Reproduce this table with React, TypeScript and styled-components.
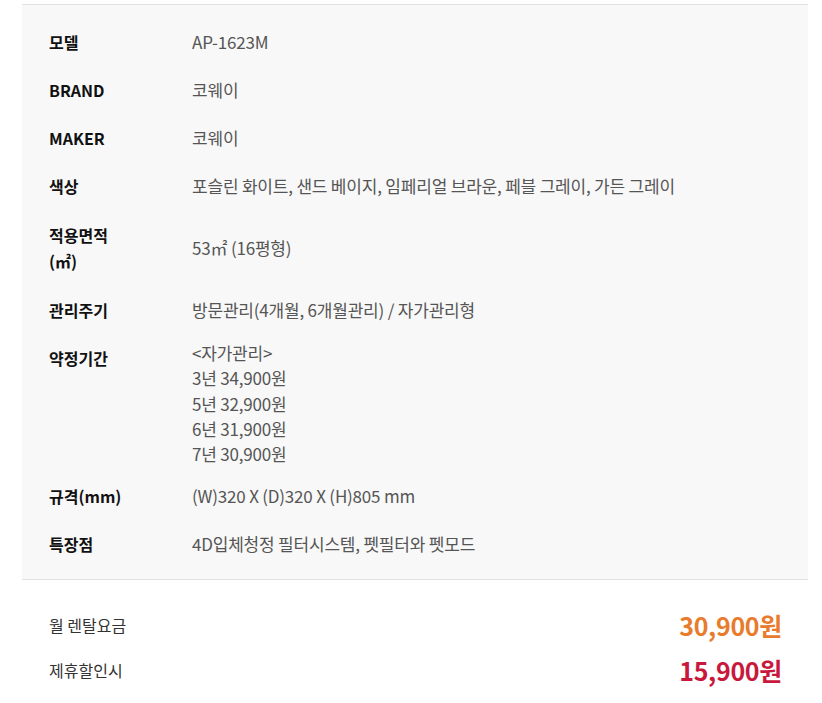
import React from 'react';
import styled, { createGlobalStyle } from 'styled-components';

const GlobalStyle = createGlobalStyle`
  body {
    margin: 0;
    background: #ffffff;
    font-family: 'Noto Sans CJK KR', 'Noto Sans', sans-serif;
  }
`;

const Wrapper = styled.div`
  padding: 4px 14px 0 22px;
`;

const SpecPanel = styled.div`
  background-color: #f8f8f8;
  border-top: 1px solid #e2e2e2;
  border-bottom: 1px solid #e2e2e2;
  padding: 13px 0 11px 27px;
`;

const SpecRow = styled.div<{ $top?: boolean }>`
  display: flex;
  align-items: ${p => (p.$top ? 'flex-start' : 'center')};
  padding: 12px 0;
  line-height: 24px;
`;

const SpecLabel = styled.div<{ $twoLine?: boolean }>`
  width: 143px;
  flex-shrink: 0;
  font-size: 16px;
  line-height: ${p => (p.$twoLine ? '26px' : '24px')};
  color: #111111;
  font-weight: 700;
`;

const SpecValue = styled.div<{ $tight?: boolean }>`
  font-size: 17px;
  color: #555555;
  letter-spacing: -0.2px;
  line-height: ${p => (p.$tight ? '25.25px' : '24px')};
  margin: ${p => (p.$tight ? '-6px 0' : '0')};
`;

const Summary = styled.div`
  padding: 22px 26px 0 27px;
`;

const SummaryRow = styled.div`
  display: flex;
  justify-content: space-between;
  align-items: center;
  height: 45px;
`;

const SummaryLabel = styled.span`
  font-size: 16px;
  color: #333333;
`;

const Price = styled.span<{ $color: string }>`
  font-size: 25px;
  font-weight: 700;
  letter-spacing: -0.3px;
  color: ${p => p.$color};
`;

type Spec = { label: React.ReactNode; value: React.ReactNode; twoLine?: boolean; multi?: boolean };

const specs: Spec[] = [
  { label: '모델', value: 'AP-1623M' },
  { label: 'BRAND', value: '코웨이' },
  { label: 'MAKER', value: '코웨이' },
  { label: '색상', value: '포슬린 화이트, 샌드 베이지, 임페리얼 브라운, 페블 그레이, 가든 그레이' },
  {
    label: (
      <>
        적용면적
        <br />
        (㎡)
      </>
    ),
    value: '53㎡ (16평형)',
    twoLine: true,
  },
  { label: '관리주기', value: '방문관리(4개월, 6개월관리) / 자가관리형' },
  {
    label: '약정기간',
    value: (
      <>
        &lt;자가관리&gt;
        <br />
        3년 34,900원
        <br />
        5년 32,900원
        <br />
        6년 31,900원
        <br />
        7년 30,900원
      </>
    ),
    multi: true,
  },
  { label: '규격(mm)', value: '(W)320 X (D)320 X (H)805 mm' },
  { label: '특장점', value: '4D입체청정 필터시스템, 펫필터와 펫모드' },
];

export default function App() {
  return (
    <>
      <GlobalStyle />
      <Wrapper>
        <SpecPanel>
          {specs.map((s, i) => (
            <SpecRow key={i} $top={s.multi}>
              <SpecLabel $twoLine={s.twoLine}>{s.label}</SpecLabel>
              <SpecValue $tight={s.multi}>{s.value}</SpecValue>
            </SpecRow>
          ))}
        </SpecPanel>
        <Summary>
          <SummaryRow>
            <SummaryLabel>월 렌탈요금</SummaryLabel>
            <Price $color="#e97b2d">30,900원</Price>
          </SummaryRow>
          <SummaryRow>
            <SummaryLabel>제휴할인시</SummaryLabel>
            <Price $color="#c8193d">15,900원</Price>
          </SummaryRow>
        </Summary>
      </Wrapper>
    </>
  );
}
